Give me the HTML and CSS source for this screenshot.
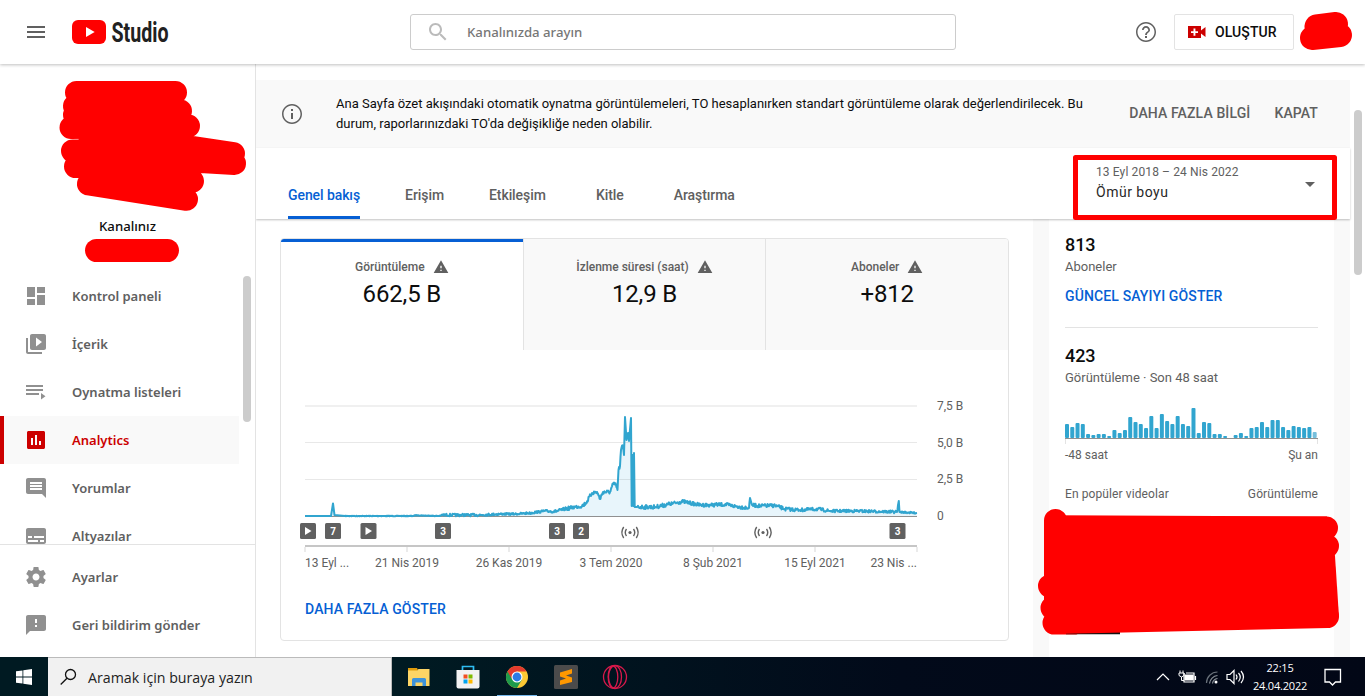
FILE: index.html
```html
<!DOCTYPE html>
<html lang="tr">
    <head>
        <meta charset="utf-8">
        <title>Kanal analizleri - YouTube Studio</title>
        <link rel="stylesheet" href="styles.css">
    </head>
    <body>
        <header class="header">
            <svg class="icon menu" viewBox="0 0 24 24"><path d="M3 18h18v-2H3v2zm0-5h18v-2H3v2zm0-7v2h18V6H3z"/></svg>
            <svg class="logo" width="110" height="40" viewBox="0 -4 110 40">
                <rect x="0" y="4" width="34" height="24" rx="6" fill="#f00"/>
                <path d="M14 11v10l8.700-5z" fill="#fff"/>
                <text x="39.500" y="26.300" textLength="57" lengthAdjust="spacingAndGlyphs">Studio</text>
            </svg>
            <div class="search">
                <svg class="icon" viewBox="0 0 24 24"><path d="M15.500 14h-.79l-.28-.27C15.410 12.590 16 11.110 16 9.500 16 5.910 13.090 3 9.500 3S3 5.910 3 9.500 5.910 16 9.500 16c1.610 0 3.090-.59 4.230-1.570l.27.28v.79l5 4.990L20.490 19l-4.990-5zm-6 0C7.010 14 5 11.990 5 9.500S7.010 5 9.500 5 14 7.010 14 9.500 11.990 14 9.500 14z"/></svg>
                <span>Kanalınızda arayın</span>
            </div>
            <svg class="icon help" viewBox="0 0 24 24"><path d="M11 18h2v-2h-2v2zm1-16C6.480 2 2 6.480 2 12s4.480 10 10 10 10-4.480 10-10S17.520 2 12 2zm0 18.500c-4.690 0-8.500-3.810-8.500-8.500S7.310 3.500 12 3.500s8.500 3.810 8.500 8.500-3.810 8.500-8.500 8.500zM12 6c-2.210 0-4 1.790-4 4h1.700c0-1.300 1-2.300 2.300-2.300s2.300 1 2.300 2.300c0 2-3.200 1.750-3.200 5h1.800c0-2.250 3.100-2.500 3.100-5 0-2.210-1.790-4-4-4z"/></svg>
            <button class="create">
                <svg width="20" height="20" viewBox="0 0 20 20"><path fill-rule="evenodd" fill="#c00" d="M1 4h13v4.500L18.500 5v10L14 11.500V16H1zM6.500 6.500v2.700H4v1.800h2.500v2.700h1.900V11H11V9.200H8.400V6.500z"/></svg>
                <span>OLUŞTUR</span>
            </button>
        </header>

        <div class="page">
            <aside class="sidebar">
                <div class="channel">Kanalınız</div>
                <nav class="nav">
                    <a class="item"><svg class="icon" viewBox="0 0 24 24"><path d="M3 13h8V3H3v10zm0 8h8v-6H3v6zm10 0h8V11h-8v10zm0-18v6h8V3h-8z"/></svg><span>Kontrol paneli</span></a>
                    <a class="item"><svg class="icon" viewBox="0 0 24 24"><path d="M4 6H2v14c0 1.100.9 2 2 2h14v-2H4V6zm16-4H8c-1.100 0-2 .9-2 2v12c0 1.100.9 2 2 2h12c1.100 0 2-.9 2-2V4c0-1.100-.9-2-2-2zm-8 12.500v-9l6 4.500-6 4.500z"/></svg><span>İçerik</span></a>
                    <a class="item"><svg class="icon" viewBox="0 0 24 24"><path d="M2 5h17v2H2zm0 4h17v2H2zm0 4h13v2H2zm15 0v6.500l4.500-3.250z"/></svg><span>Oynatma listeleri</span></a>
                    <a class="item active"><svg class="icon" viewBox="0 0 24 24"><path d="M19.500 3h-15C3.700 3 3 3.700 3 4.500v15c0 .8.7 1.500 1.500 1.500h15c.8 0 1.500-.7 1.500-1.500v-15c0-.8-.7-1.500-1.500-1.500zM9 17H7v-7h2v7zm4 0h-2V7h2v10zm4 0h-2v-4h2v4z"/></svg><span>Analytics</span></a>
                    <a class="item"><svg class="icon" viewBox="0 0 24 24"><path d="M21.990 4c0-1.100-.89-2-1.990-2H4c-1.100 0-2 .9-2 2v12c0 1.100.9 2 2 2h14l4 4-.01-18zM18 14H6v-2h12v2zm0-3H6V9h12v2zm0-3H6V6h12v2z"/></svg><span>Yorumlar</span></a>
                    <a class="item"><svg class="icon" viewBox="0 0 24 24"><path d="M20 4H4c-1.100 0-2 .9-2 2v12c0 1.100.9 2 2 2h16c1.100 0 2-.9 2-2V6c0-1.100-.9-2-2-2zM4 12h4v2H4v-2zm10 6H4v-2h10v2zm6 0h-4v-2h4v2zm0-4H10v-2h10v2z"/></svg><span>Altyazılar</span></a>
                </nav>
                <div class="nav-footer">
                    <a class="item"><svg class="icon" viewBox="0 0 24 24"><path d="M19.430 12.980c.04-.32.07-.64.07-.98s-.03-.66-.07-.98l2.110-1.650c.19-.15.24-.42.12-.64l-2-3.460c-.12-.22-.39-.3-.61-.22l-2.490 1c-.52-.4-1.080-.73-1.690-.98l-.38-2.650C14.460 2.180 14.250 2 14 2h-4c-.25 0-.46.18-.49.42l-.38 2.650c-.61.25-1.170.59-1.690.98l-2.490-1c-.23-.09-.49 0-.61.22l-2 3.460c-.13.22-.07.49.12.64l2.110 1.650c-.04.32-.07.65-.07.98s.03.66.07.98l-2.110 1.650c-.19.15-.24.42-.12.64l2 3.460c.12.22.39.3.61.22l2.490-1c.52.4 1.080.73 1.690.98l.38 2.650c.03.24.24.42.49.42h4c.25 0 .46-.18.49-.42l.38-2.650c.61-.25 1.170-.59 1.690-.98l2.490 1c.23.09.49 0 .61-.22l2-3.460c.12-.22.07-.49-.12-.64l-2.110-1.650zM12 15.500c-1.930 0-3.500-1.570-3.500-3.500s1.570-3.500 3.500-3.500 3.500 1.570 3.500 3.500-1.570 3.500-3.500 3.500z"/></svg><span>Ayarlar</span></a>
                    <a class="item"><svg class="icon" viewBox="0 0 24 24"><path d="M20 2H4c-1.100 0-1.990.9-1.990 2L2 22l4-4h14c1.100 0 2-.9 2-2V4c0-1.100-.9-2-2-2zm-7 12h-2v-2h2v2zm0-4h-2V6h2v4z"/></svg><span>Geri bildirim gönder</span></a>
                </div>
                <div class="thumb side-thumb"></div>
            </aside>

            <main class="main">
                <div class="notice">
                    <svg class="icon" viewBox="0 0 24 24"><path d="M11 17h2v-6h-2v6zm1-15C6.480 2 2 6.480 2 12s4.480 10 10 10 10-4.480 10-10S17.520 2 12 2zm0 18.500c-4.690 0-8.500-3.810-8.500-8.500S7.310 3.500 12 3.500s8.500 3.810 8.500 8.500-3.810 8.500-8.500 8.500zM11 9h2V7h-2v2z"/></svg>
                    <p>Ana Sayfa özet akışındaki otomatik oynatma görüntülemeleri, TO hesaplanırken standart görüntüleme olarak değerlendirilecek. Bu<br>durum, raporlarınızdaki TO'da değişikliğe neden olabilir.</p>
                    <a class="more">DAHA FAZLA BİLGİ</a>
                    <a class="close">KAPAT</a>
                </div>
                <div class="tabs">
                    <a class="tab active">Genel bakış</a>
                    <a class="tab">Erişim</a>
                    <a class="tab">Etkileşim</a>
                    <a class="tab">Kitle</a>
                    <a class="tab">Araştırma</a>
                    <div class="period">
                        <div class="range">13 Eyl 2018 – 24 Nis 2022</div>
                        <div class="name">Ömür boyu</div>
                        <i class="caret"></i>
                    </div>
                </div>
                <div class="content">
                    <section class="card">
                        <div class="metrics">
                            <div class="metric active">
                                <div class="label">Görüntüleme <svg viewBox="0 0 24 24"><path d="M1 21h22L12 2 1 21zm12-3h-2v-2h2v2zm0-4h-2v-4h2v4z"/></svg></div>
                                <div class="value">662,5 B</div>
                            </div>
                            <div class="metric">
                                <div class="label">İzlenme süresi (saat) <svg viewBox="0 0 24 24"><path d="M1 21h22L12 2 1 21zm12-3h-2v-2h2v2zm0-4h-2v-4h2v4z"/></svg></div>
                                <div class="value">12,9 B</div>
                            </div>
                            <div class="metric">
                                <div class="label">Aboneler <svg viewBox="0 0 24 24"><path d="M1 21h22L12 2 1 21zm12-3h-2v-2h2v2zm0-4h-2v-4h2v4z"/></svg></div>
                                <div class="value">+812</div>
                            </div>
                        </div>
                        <!-- user units are page pixels -->
                        <svg class="chart" width="700" height="190" viewBox="295 390 700 190">
                            <g stroke="#e8e8e8">
                                <path d="M305 406h612" stroke="#f0f0f0" stroke-width="2"/>
                                <path d="M305 442.500h612M305 479.500h612"/>
                            </g>
                            <path d="M305 516.500h612" stroke="#909090"/>
                            <path id="area" fill="#e8f5fb"/>
                            <path d="M625 442.500h6M618 479.500h13" stroke="#d3dfe4"/>
                            <path id="line" fill="none" stroke="#31a5cf" stroke-width="2" stroke-linejoin="round"/>
                            <path d="M305 546h612" stroke="#c6c6c6" stroke-width="2"/>
                            <path d="M305 547v5M407 547v5M509 547v5M611 547v5M713 547v5M815 547v5M917 547v5" stroke="#ebebeb" stroke-width="2"/>
                            <g id="markers"></g>
                            <g class="axis">
                                <text x="937" y="410">7,5 B</text>
                                <text x="937" y="447">5,0 B</text>
                                <text x="937" y="483">2,5 B</text>
                                <text x="937" y="520">0</text>
                                <text x="305" y="567">13 Eyl ...</text>
                                <text x="407" y="567" text-anchor="middle">21 Nis 2019</text>
                                <text x="509" y="567" text-anchor="middle">26 Kas 2019</text>
                                <text x="611" y="567" text-anchor="middle">3 Tem 2020</text>
                                <text x="713" y="567" text-anchor="middle">8 Şub 2021</text>
                                <text x="815" y="567" text-anchor="middle">15 Eyl 2021</text>
                                <text x="917" y="567" text-anchor="end">23 Nis ...</text>
                            </g>
                        </svg>
                        <a class="link">DAHA FAZLA GÖSTER</a>
                    </section>
                    <section class="side">
                        <div class="panel">
                            <div class="count">813</div>
                            <div class="sub">Aboneler</div>
                            <a class="link">GÜNCEL SAYIYI GÖSTER</a>
                            <hr>
                            <div class="count">423</div>
                            <div class="sub">Görüntüleme · Son 48 saat</div>
                            <svg id="bars" width="253" height="40" viewBox="0 0 253 40"></svg>
                            <div class="row"><span>-48 saat</span><span>Şu an</span></div>
                            <div class="row videos"><span>En popüler videolar</span><span>Görüntüleme</span></div>
                        </div>
                    </section>
                </div>
                <div class="thumb main-thumb"></div>
            </main>
        </div>

        <footer class="taskbar">
            <div class="start"><svg width="16" height="16" viewBox="0 0 16 16" fill="#fff"><path d="M0 2.300l6.500-.9v6.200H0zM7.300 1.300L16 0v7.600H7.300zM0 8.400h6.500v6.200L0 13.700zM7.300 8.400H16V16l-8.700-1.300z"/></svg></div>
            <div class="find">
                <svg width="18" height="18" viewBox="0 0 18 18" fill="none" stroke="#111" stroke-width="1.300"><circle cx="10.500" cy="6.500" r="5"/><path d="M7 10.200L.7 16.500"/></svg>
                <span>Aramak için buraya yazın</span>
            </div>
            <div class="apps">
                <div class="app">
                    <svg width="24" height="24" viewBox="0 0 24 24"><path d="M1 3h9l1 2h-1v2H1z" fill="#e09c0b"/><path d="M1 5.500h9L11.500 4H22.500v17H1z" fill="#fcd566"/><path d="M5 21v-6.500q0-1.500 1.500-1.500h11q1.500 0 1.500 1.500V21h-3.500v-3.500h-7V21z" fill="#3d93da"/></svg>
                </div>
                <div class="app">
                    <svg width="24" height="24" viewBox="0 0 24 24"><path d="M6.500 5V1.500h11V5" fill="none" stroke="#2fbdf2" stroke-width="1.700"/><path d="M.5 5h23v16.500q0 2-2 2h-19q-2 0-2-2z" fill="#f2f2f2"/><path d="M7.500 9.500h4v4h-4z" fill="#f25022"/><path d="M12.500 9.500h4v4h-4z" fill="#7fba00"/><path d="M7.500 14.500h4v4h-4z" fill="#00a4ef"/><path d="M12.500 14.500h4v4h-4z" fill="#ffb900"/></svg>
                </div>
                <div class="app open">
                    <svg width="24" height="24" viewBox="0 0 24 24"><circle cx="12" cy="12" r="11" fill="#fcc934"/><path d="M12 12L2.470 6.500A11 11 0 0 0 12 23l5-8.500z" fill="#1e9a4b"/><path d="M12 6.500h9.500L18 13z" fill="#fcc934"/><path d="M2.470 6.500A11 11 0 0 1 21.530 6.500H12L7 14z" fill="#e33b2e"/><circle cx="12" cy="12" r="5.500" fill="#fff"/><circle cx="12" cy="12" r="4.400" fill="#2c7be5"/></svg>
                </div>
                <div class="app">
                    <svg width="24" height="24" viewBox="0 0 24 24"><rect width="24" height="24" rx="1.500" fill="#4b4b4b"/><path d="M18 4v4.500l-6 2 6 2V17L6 20v-4.500l6-2-6-2V7.500z" fill="#ff9800"/></svg>
                </div>
                <div class="app">
                    <svg width="26" height="26" viewBox="0 0 26 26" fill="none" stroke="#d8194b" stroke-width="1.300"><circle cx="13" cy="13" r="11.500"/><ellipse cx="11" cy="13" rx="4.800" ry="11"/><ellipse cx="13" cy="13" rx="6.500" ry="11.300"/></svg>
                </div>
            </div>
            <div class="tray">
                <svg class="status" width="98" height="24" viewBox="0 0 98 24" fill="none" stroke="#fff" stroke-width="1.200">
                    <path d="M2 15l6-6 6 6"/>
                    <path d="M29 8v9h10v-9H31M40.500 11v4"/><path d="M30 10h8v5h-8z" fill="#fff"/><path d="M24 8h5v2.500q-2.500 3-5 0zM25 5.500V8M28 5.500V8M26.500 12v3.500H29" stroke-width="1"/>
                    <path d="M51.500 18A11 11 0 0 1 62.500 7" stroke="#69717a"/><path d="M54.500 18.500a9 9 0 0 1 8-8M57.500 18.500a6 6 0 0 1 5-5" stroke="#8a9198"/><circle cx="61" cy="17" r="1.500" fill="#fff" stroke="none"/>
                    <path d="M72 9.500h3l4-4v13l-4-4h-3zM81 9.500q2 2.500 0 5M83.500 8q3.500 4 0 8.500M86 6q5 6 0 12"/>
                </svg>
                <div class="clock"><div>22:15</div><div>24.04.2022</div></div>
                <svg class="bubble" width="18" height="18" viewBox="0 0 18 18" fill="none" stroke="#fff" stroke-width="1.300"><path d="M1 1.500h15.500v12.500H11.500l-3 3-3-3H1z"/></svg>
            </div>
        </footer>

        <!-- marker pen drawn over the page -->
        <svg class="pen" width="1365" height="696" viewBox="0 0 1365 696">
            <g fill="none" stroke="#f00" stroke-linecap="round" stroke-width="23">
                <path d="M76.500 92.500h99M74.500 106l106 5M74.500 115H150M71 127.500l117.500-1.500M190 147l43.500 6.500M72.500 151H190M192 161l42.500 2.500M75.500 166.500H190M88.500 184l104-3M88.500 184l98 15.300"/>
                <path d="M96.500 250.500h71"/>
                <path d="M1316.500 26.500l19.500-2.500M1312 38l28-3" stroke-width="24"/>
                <path d="M1055.500 520.500V600M1326.500 528H1100M1327.500 546H1100M1049.500 586H1100M1052 608h50M1054 623h20M1327.500 616.500h-20"/>
            </g>
            <path d="M76 92h100l12 34v20l4 35-100 2-12-18z" fill="#f00"/>
            <path d="M1066 632h54v2.300h-54z" fill="#111"/>
            <path d="M1055 515.300L1327 516.500 1335 556l4 61-11 11-272 6-11-110z" fill="#f00"/>
            <rect x="1075.500" y="157.500" width="259" height="60" fill="none" stroke="#f00" stroke-width="5" stroke-linejoin="round"/>
        </svg>
        <script src="chart.js"></script>
    </body>
</html>
```
FILE: styles.css
```css
/**/

body {
    margin: 0;
    height: 696px;
    display: flex;
    flex-direction: column;
    overflow: hidden;
    background: #fff;
    color: #0d0d0d;
    font-family: Roboto, Arial, sans-serif;
    font-size: 13px;
}

.icon {
    width: 24px;
    height: 24px;
    fill: #606060;
    flex: none;
}

/* header */

.header {
    position: relative;
    z-index: 2;
    display: flex;
    align-items: center;
    flex: none;
    height: 64px;
    box-sizing: border-box;
    padding-right: 71px;
    box-shadow: 0 1px 3px rgba(0, 0, 0, 0.25);
    background: #fff;
}

.menu {
    margin-left: 24px;
}

.logo {
    margin-left: 24px;
}

.logo text {
    font: bold 28px Roboto, sans-serif;
    fill: #212121;
}

.search {
    display: flex;
    align-items: center;
    box-sizing: border-box;
    width: 546px;
    height: 36px;
    margin-left: 228px;
    padding-left: 15px;
    border: 1px solid #ccc;
    border-radius: 3px;
    color: #777;
    font: 500 13.2px "Noto Sans", sans-serif;
}

.search .icon {
    fill: #bbb;
}

.search span {
    margin: -1px 0 0 17px;
}

.help {
    margin-left: auto;
}

.create {
    display: flex;
    align-items: center;
    box-sizing: border-box;
    width: 120px;
    height: 36px;
    margin-left: 16px;
    padding: 0 0 0 12px;
    border: 1px solid #e3e3e3;
    border-radius: 2px;
    background: #fff;
    color: #0d0d0d;
    font: 500 14px Roboto, sans-serif;
    letter-spacing: 0.1px;
}

.create svg {
    margin-right: 8px;
}

.create span {
    margin-top: -1px;
}

/* sidebar */

.page {
    display: flex;
    height: 593px;
}

.sidebar {
    position: relative;
    display: flex;
    flex-direction: column;
    box-sizing: border-box;
    width: 256px;
    border-right: 1px solid #e3e3e3;
    font-family: "Noto Sans", sans-serif;
}

.channel {
    box-sizing: border-box;
    height: 208px;
    padding-top: 152px;
    text-align: center;
    font-size: 13.2px;
    line-height: 20px;
    font-weight: 500;
}

.nav {
    height: 272px;
    overflow: hidden;
    border-bottom: 1px solid #e3e3e3;
}

.nav-footer {
    padding-top: 8px;
}

.item {
    display: flex;
    align-items: center;
    box-sizing: border-box;
    width: 239px;
    height: 48px;
    padding-left: 24px;
    color: #606060;
    font-size: 13px;
    font-weight: 600;
}

.item span {
    line-height: 20px;
}

.item .icon {
    margin-right: 24px;
    fill: #909090;
}

.item.active {
    padding-left: 20px;
    border-left: 4px solid #c00;
    background: #f9f9f9;
    color: #c00;
}

.item.active .icon {
    fill: #c00;
}

/* scrollbars */

.thumb {
    position: absolute;
    width: 8px;
    border-radius: 4px;
    background: #ccc;
}

.side-thumb {
    left: 243px;
    top: 212px;
    height: 146px;
}

.main-thumb {
    right: 3px;
    top: 46px;
    height: 165px;
}

/* main */

.main {
    position: relative;
    flex: 1;
    padding: 16px 15px 0 0;
    overflow: hidden;
}

.notice {
    display: flex;
    align-items: center;
    box-sizing: border-box;
    height: 68px;
    padding: 0 32px 0 24px;
    background: #f9f9f9;
}

.notice p {
    margin: 0 0 0 32px;
    line-height: 20px;
    white-space: nowrap;
}

.more, .close {
    color: #606060;
    font-size: 14px;
    font-weight: 500;
    letter-spacing: 0.12px;
    margin-top: -2px;
}

.more {
    margin-left: auto;
}

.close {
    margin-left: 24px;
}

.tabs {
    position: relative;
    z-index: 1;
    display: flex;
    gap: 45px;
    height: 71px;
    padding-left: 32px;
    background: #fff;
    box-shadow: 0 1px 2px rgba(0, 0, 0, 0.25);
}

.tab {
    box-sizing: border-box;
    min-width: 38px;
    height: 71px;
    padding-top: 37px;
    text-align: center;
    color: #606060;
    font-size: 14px;
    line-height: 20px;
    font-weight: 500;
    letter-spacing: -0.08px;
}

.tab.active {
    color: #065fd4;
    border-bottom: 3px solid #065fd4;
}

.period {
    position: relative;
    width: 222px;
    margin-left: auto;
    padding: 14px 32px 0 0;
}

.range {
    color: #606060;
    font-size: 12px;
    line-height: 20px;
    letter-spacing: 0.12px;
}

.name {
    color: #282828;
    font-size: 14px;
    line-height: 20px;
    letter-spacing: 0.5px;
}

.caret {
    position: absolute;
    right: 35px;
    top: 34px;
    border: 5px solid transparent;
    border-top-color: #606060;
    border-bottom: 0;
}

.content {
    display: flex;
    height: 438px;
}

.card {
    box-sizing: border-box;
    width: 729px;
    height: 403px;
    margin: 19px 24px 0 24px;
    border: 1px solid #e3e3e3;
    border-radius: 4px;
    overflow: hidden;
}

.metrics {
    display: flex;
    height: 111px;
    margin-bottom: 40px;
}

.metric {
    flex: 1;
    padding-top: 18px;
    border-left: 1px solid #e3e3e3;
    background: #f9f9f9;
    text-align: center;
}

.metric.active {
    padding-top: 15px;
    border-left: 0;
    border-top: 3px solid #065fd4;
    background: #fff;
}

.label {
    display: flex;
    align-items: center;
    justify-content: center;
    height: 20px;
    color: #606060;
    font-size: 12px;
    font-weight: 500;
}

.label svg {
    width: 16px;
    height: 16px;
    margin-left: 8px;
    fill: #606060;
}

.value {
    margin-top: 1px;
    font-size: 24px;
    line-height: 32px;
    letter-spacing: -0.15px;
}

.chart {
    display: block;
    margin-left: 14px;
}

.axis text {
    fill: #606060;
    font-size: 12px;
}

.badge {
    fill: #fff;
    font-size: 10px;
    font-weight: bold;
    text-anchor: middle;
}

.link {
    color: #065fd4;
    font-size: 14px;
    line-height: 20px;
    font-weight: 500;
    letter-spacing: 0.13px;
}

.card .link {
    display: block;
    margin: 19px 0 0 24px;
}

.side {
    flex: 1;
    padding: 0 16px;
    background: #f9f9f9;
}

.panel {
    height: 438px;
    padding: 14px 16px 0;
    box-sizing: border-box;
    background: #fff;
}

.count {
    font-size: 18px;
    line-height: 24px;
    font-weight: 500;
    letter-spacing: -0.1px;
}

.sub {
    color: #606060;
    line-height: 20px;
}

.panel .link {
    display: block;
    margin-top: 9px;
}

.panel hr {
    height: 1px;
    margin: 21px 0 16px;
    border: 0;
    background: #e3e3e3;
}

#bars {
    display: block;
    margin-top: 16px;
}

.row {
    display: flex;
    justify-content: space-between;
    margin-top: 1px;
    color: #606060;
    font-size: 12px;
    line-height: 20px;
}

.videos {
    margin-top: 19px;
    letter-spacing: 0.1px;
}

/* taskbar */

.taskbar {
    display: flex;
    flex: none;
    height: 39px;
    background: linear-gradient(to right, #001a22 0, #001a22 420px, #020a1a 900px, #020716);
    font-family: "Open Sans", "Noto Sans", sans-serif;
}

.start {
    display: flex;
    align-items: center;
    justify-content: center;
    width: 48px;
}

.find {
    display: flex;
    align-items: center;
    box-sizing: border-box;
    width: 344px;
    padding-left: 12px;
    border-top: 1px solid #bbb;
    border-right: 1px solid #bbb;
    background: #f1f1f1;
    color: #222;
    font-size: 14.2px;
}

.find span {
    margin-left: 10px;
}

.apps {
    display: flex;
    margin-left: 7px;
    gap: 9px;
}

.app {
    display: flex;
    align-items: center;
    justify-content: center;
    box-sizing: border-box;
    width: 40px;
    padding-top: 1px;
}

.app.open {
    box-shadow: inset 0 -1px #76b9ed;
}

.tray {
    display: flex;
    align-items: center;
    margin-left: auto;
    width: 210px;
    height: 39px;
    color: #fff;
}

.status {
    flex: none;
}

.clock {
    flex: none;
    width: 54px;
    text-align: center;
    font-size: 11px;
    line-height: 18px;
    letter-spacing: -0.2px;
}

.bubble {
    flex: none;
    margin-left: 17px;
}

.pen {
    position: absolute;
    left: 0;
    top: 0;
    z-index: 3;
}
/**/
```
FILE: chart.js
```js
// daily views, [x, y, jitter]
var points = [
    [305, 516, 0], [331, 516, 0], [333, 503.5, 0], [334.5, 515, 0], [345, 516, 0.3], [413, 516, 0.2],
    [415, 515.3, 0.3], [439, 516, 0.5], [442, 515, 1.3], [480, 515, 1.1], [500, 514, 1], [515, 514, 1],
    [530, 513, 1.2], [545, 511, 1.3], [555, 511.5, 1.5], [565, 509, 1.8], [575, 507, 1.8],
    [582, 506, 2], [586, 503, 2], [592, 493, 2], [597, 492, 2], [600, 499, 2], [603, 492, 2],
    [610, 492, 2], [613, 484, 2], [616, 485, 2], [617.5, 490, 1], [618.5, 470, 2], [620, 466, 3],
    [621, 450, 3], [623, 446, 0], [624, 455, 0], [625, 417, 0], [626.5, 440, 0], [628, 433, 0],
    [629, 441, 0], [631, 418, 0], [631.7, 506, 0], [632.7, 455, 0], [633.2, 506, 0], [634, 453, 0],
    [634.7, 507, 0],
    [637, 507, 2], [655, 507, 2], [670, 504, 1.8], [683, 501.5, 1.8], [700, 505, 1.8],
    [710, 505, 1.8], [725, 504.5, 1.8], [740, 507, 1.8], [749, 508, 1], [750, 498, 0],
    [752, 505, 1.8], [760, 506, 1.8], [775, 505.5, 1.8], [785, 509, 1.8], [800, 510, 1.7],
    [818, 509, 1.6], [830, 511, 1.3], [860, 511, 1.3], [897, 512, 0.8], [898.8, 501, 0],
    [899.5, 512, 0.8], [917, 513, 1.2]
];

var seed = 7;
function noise() {
    seed = (seed * 16807) % 2147483647;
    return seed / 2147483647 * 2 - 1;
}

var line = [];
for (var i = 0; i < points.length; i++) {
    var p = points[i];
    line.push(p[0] + " " + p[1]);
    if (i == points.length - 1) break;
    var q = points[i + 1];
    for (var x = p[0] + 0.5; p[2] > 0 && x < q[0] - 0.3; x += 0.5) {
        var y = p[1] + (q[1] - p[1]) * (x - p[0]) / (q[0] - p[0]);
        line.push(x.toFixed(1) + " " + (y + noise() * p[2]).toFixed(1));
    }
}
document.getElementById("line").setAttribute("d", "M" + line.join("L"));
document.getElementById("area").setAttribute("d", "M" + line.join("L") + "L917 516L305 516z");

// uploads and live streams under the chart
var markers = [
    [308, "play"], [333, "7"], [368.5, "play"], [443, "3"], [557, "3"], [581, "2"],
    [630, "live"], [763, "live"], [897.5, "3"]
];
document.getElementById("markers").innerHTML = markers.map(function(m) {
    var x = m[0];
    if (m[1] == "live") {
        return '<g fill="none" stroke="#606060" stroke-width="1.4" transform="translate(' + x + ' 532.5)">' +
            '<circle r="1.6" fill="#606060" stroke="none"/>' +
            '<path d="M-3.500 -3.500Q-6 0 -3.500 3.500M3.500 -3.500Q6 0 3.500 3.500M-6.300 -5.500Q-10 0 -6.300 5.500M6.300 -5.500Q10 0 6.300 5.500"/></g>';
    }
    var box = '<rect x="' + (x - 8) + '" y="523" width="16" height="16" rx="1.500" fill="#606060"/>';
    if (m[1] == "play") {
        return box + '<path d="M' + (x - 3) + ' 527v8l6.500-4z" fill="#fff"/>';
    }
    return box + '<text class="badge" x="' + x + '" y="535">' + m[1] + '</text>';
}).join("");

// last 48 hours
var hours = [14, 11, 15, 14, 4, 3, 4, 4, 2, 8, 5, 8, 21, 16, 14, 10, 22, 10, 24, 17, 14, 22, 14, 12,
    30, 5, 16, 15, 4, 4, 2, 0, 3, 5, 2, 10, 11, 16, 11, 18, 18, 11, 8, 12, 11, 10, 11, 6];
document.getElementById("bars").innerHTML = hours.map(function(h, i) {
    var x = (i * 5.27).toFixed(2);
    return '<rect x="' + x + '" y="' + (34 - h) + '" width="4" height="' + h + '" rx="1" fill="' +
        (i == 47 ? "#76bfdc" : "#31a5cf") + '"/>';
}).join("") + '<path d="M0 34.500h253" stroke="#909090"/><path d="M.5 35v5M252.500 35v5" stroke="#e3e3e3"/>';
```
